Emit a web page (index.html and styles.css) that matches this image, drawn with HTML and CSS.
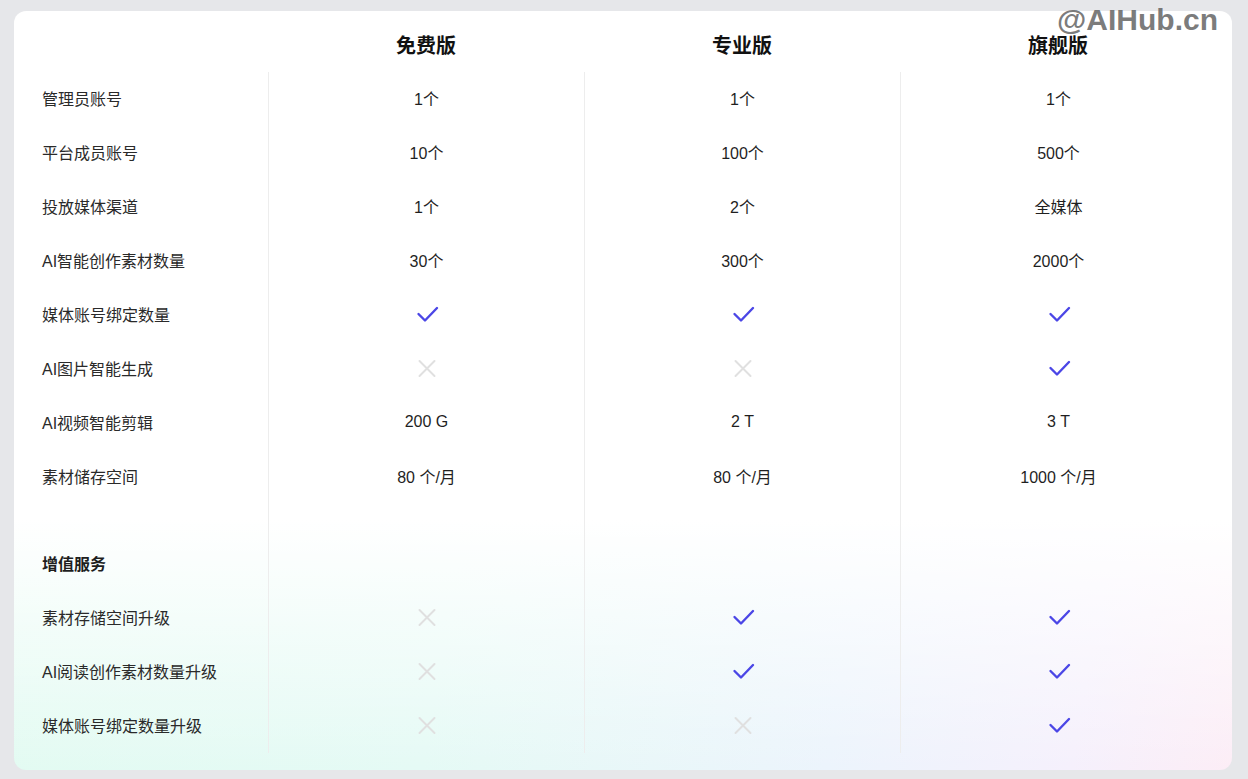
FILE: index.html
```html
<!DOCTYPE html>
<html lang="zh">
<head>
<meta charset="utf-8">
<title>版本对比</title>
<link rel="stylesheet" href="styles.css">
</head>
<body>
<div class="card">
  <div class="grid">
    <div class="head"></div>
    <div class="head">免费版</div>
    <div class="head">专业版</div>
    <div class="head">旗舰版</div>

    <div class="label">管理员账号</div>
    <div class="val">1个</div><div class="val">1个</div><div class="val">1个</div>

    <div class="label">平台成员账号</div>
    <div class="val">10个</div><div class="val">100个</div><div class="val">500个</div>

    <div class="label">投放媒体渠道</div>
    <div class="val">1个</div><div class="val">2个</div><div class="val">全媒体</div>

    <div class="label">AI智能创作素材数量</div>
    <div class="val">30个</div><div class="val">300个</div><div class="val">2000个</div>

    <div class="label">媒体账号绑定数量</div>
    <div class="val"><svg class="ic-yes" viewBox="0 0 24 24"><polyline points="3.5,12 10,18.5 22,6"/></svg></div>
    <div class="val"><svg class="ic-yes" viewBox="0 0 24 24"><polyline points="3.5,12 10,18.5 22,6"/></svg></div>
    <div class="val"><svg class="ic-yes" viewBox="0 0 24 24"><polyline points="3.5,12 10,18.5 22,6"/></svg></div>

    <div class="label">AI图片智能生成</div>
    <div class="val"><svg class="ic-no" viewBox="0 0 24 24"><path d="M4.5 5 L19.5 20 M19.5 5 L4.5 20"/></svg></div>
    <div class="val"><svg class="ic-no" viewBox="0 0 24 24"><path d="M4.5 5 L19.5 20 M19.5 5 L4.5 20"/></svg></div>
    <div class="val"><svg class="ic-yes" viewBox="0 0 24 24"><polyline points="3.5,12 10,18.5 22,6"/></svg></div>

    <div class="label">AI视频智能剪辑</div>
    <div class="val">200 G</div><div class="val">2 T</div><div class="val">3 T</div>

    <div class="label">素材储存空间</div>
    <div class="val">80 个/月</div><div class="val">80 个/月</div><div class="val">1000 个/月</div>

    <div class="spacer"></div>
    <div class="val"></div><div class="val"></div><div class="val"></div>

    <div class="label section">增值服务</div>
    <div class="val"></div><div class="val"></div><div class="val"></div>

    <div class="label">素材存储空间升级</div>
    <div class="val"><svg class="ic-no" viewBox="0 0 24 24"><path d="M4.5 5 L19.5 20 M19.5 5 L4.5 20"/></svg></div>
    <div class="val"><svg class="ic-yes" viewBox="0 0 24 24"><polyline points="3.5,12 10,18.5 22,6"/></svg></div>
    <div class="val"><svg class="ic-yes" viewBox="0 0 24 24"><polyline points="3.5,12 10,18.5 22,6"/></svg></div>

    <div class="label">AI阅读创作素材数量升级</div>
    <div class="val"><svg class="ic-no" viewBox="0 0 24 24"><path d="M4.5 5 L19.5 20 M19.5 5 L4.5 20"/></svg></div>
    <div class="val"><svg class="ic-yes" viewBox="0 0 24 24"><polyline points="3.5,12 10,18.5 22,6"/></svg></div>
    <div class="val"><svg class="ic-yes" viewBox="0 0 24 24"><polyline points="3.5,12 10,18.5 22,6"/></svg></div>

    <div class="label">媒体账号绑定数量升级</div>
    <div class="val"><svg class="ic-no" viewBox="0 0 24 24"><path d="M4.5 5 L19.5 20 M19.5 5 L4.5 20"/></svg></div>
    <div class="val"><svg class="ic-no" viewBox="0 0 24 24"><path d="M4.5 5 L19.5 20 M19.5 5 L4.5 20"/></svg></div>
    <div class="val"><svg class="ic-yes" viewBox="0 0 24 24"><polyline points="3.5,12 10,18.5 22,6"/></svg></div>
  </div>
</div>
<div class="watermark">@AIHub.cn</div>
</body>
</html>
```

FILE: styles.css
```css
* { box-sizing: border-box; }
html, body { margin: 0; padding: 0; }
body {
  background: #e6e7ea;
  font-family: "Liberation Sans", "Noto Sans CJK SC", sans-serif;
  color: #222;
  width: 1248px;
  height: 779px;
  overflow: hidden;
  padding: 11px 0 0 14px;
}
.card {
  width: 1218px;
  height: 759px;
  border-radius: 12px;
  padding: 0 16px 17px 0;
  background:
    linear-gradient(to bottom, #ffffff 0%, #ffffff 67%, rgba(255,255,255,0) 100%),
    linear-gradient(100deg, #e2fbf1 0%, #e5faf5 40%, #ecf4fc 70%, #f5f0fc 88%, #fcedf6 100%);
}
.grid {
  display: grid;
  grid-template-columns: 254px repeat(3, 316px);
  grid-template-rows: 61px repeat(8, 54px) 33px repeat(4, 54px);
}
.head {
  font-size: 20px;
  font-weight: 700;
  color: #111;
  text-align: center;
  line-height: 24px;
  padding-top: 23px;
}
.label {
  display: flex;
  align-items: center;
  padding-left: 28px;
  padding-bottom: 2px;
  font-size: 16px;
  color: #2a2a2a;
}
.label.section {
  font-weight: 700;
  color: #1e1e1e;
}
.val {
  display: flex;
  align-items: center;
  justify-content: center;
  padding-bottom: 2px;
  border-left: 1px solid #ededed;
  font-size: 16px;
  color: #1f1f1f;
}
.ic-yes {
  width: 24px;
  height: 24px;
  fill: none;
  stroke: #4b46e6;
  stroke-width: 2.4;
  stroke-linecap: round;
  stroke-linejoin: round;
}
.ic-no {
  width: 24px;
  height: 24px;
  fill: none;
  stroke: #e0e0e0;
  stroke-width: 2;
  stroke-linecap: round;
}
.watermark {
  position: absolute;
  top: 5px;
  right: 30px;
  font-family: "Liberation Sans", sans-serif;
  font-weight: 700;
  font-size: 30px;
  line-height: 30px;
  color: rgba(100, 100, 100, 0.85);
}
```
